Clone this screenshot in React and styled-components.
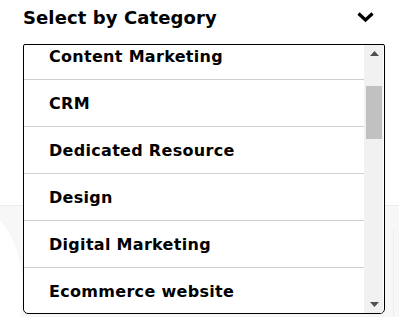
import React, { useLayoutEffect, useRef } from "react";
import styled, { createGlobalStyle } from "styled-components";

const categories = [
  "Content Marketing",
  "CRM",
  "Dedicated Resource",
  "Design",
  "Digital Marketing",
  "Ecommerce website",
];

export default function App() {
  const viewRef = useRef(null);

  useLayoutEffect(() => {
    if (viewRef.current) viewRef.current.scrollTop = 12;
  }, []);

  return (
    <>
      <GlobalStyle />
      <Page>
        <Header>
          <Title>Select by Category</Title>
          <svg width="19" height="12" viewBox="0 0 19 12">
            <path
              d="M2.5 2.5 L9.5 9 L16.5 2.5"
              fill="none"
              stroke="#000"
              strokeWidth="3.2"
            />
          </svg>
        </Header>
        <ListBox>
          <Viewport ref={viewRef}>
            {categories.map((c) => (
              <Option key={c}>{c}</Option>
            ))}
          </Viewport>
          <Scrollbar>
            <ArrowButton>
              <svg width="9" height="5" viewBox="0 0 9 5">
                <path d="M0 5 L4.5 0 L9 5 Z" fill="#505050" />
              </svg>
            </ArrowButton>
            <Track>
              <Thumb />
            </Track>
            <ArrowButton>
              <svg width="9" height="5" viewBox="0 0 9 5">
                <path d="M0 0 L4.5 5 L9 0 Z" fill="#505050" />
              </svg>
            </ArrowButton>
          </Scrollbar>
        </ListBox>
      </Page>
    </>
  );
}

const GlobalStyle = createGlobalStyle`
  html, body {
    margin: 0;
    padding: 0;
  }
  body {
    font-family: "DejaVu Sans", "Liberation Sans", sans-serif;
    color: #000;
    background:
      linear-gradient(#ececec, #ececec) 393px 230px / 1px 100% no-repeat,
      radial-gradient(ellipse 60px 110px at -20px 290px, #fff 70%, transparent 72%),
      linear-gradient(#fff 0 205px, #ececec 205px 206px, #f7f7f7 206px);
    min-height: 317px;
  }
`;

const Page = styled.div`
  width: 399px;
  height: 317px;
  box-sizing: border-box;
  padding: 0 14px 0 23px;
  display: flex;
  flex-direction: column;
`;

const Header = styled.div`
  height: 32px;
  display: flex;
  align-items: center;
  justify-content: space-between;
  padding-right: 10px;
  margin-top: 1px;
`;

const Title = styled.h2`
  margin: 0;
  font-size: 18px;
  font-weight: 700;
  letter-spacing: 0.1px;
`;

const ListBox = styled.div`
  margin-top: 11px;
  height: 270px;
  box-sizing: border-box;
  border: 1px solid #000;
  border-radius: 2px 2px 5px 5px;
  background: #fff;
  overflow: hidden;
  display: flex;
`;

const Viewport = styled.div`
  flex: 1;
  overflow: hidden;
`;

const Option = styled.div`
  height: 47px;
  box-sizing: border-box;
  border-bottom: 1px solid #cfcfcf;
  display: flex;
  align-items: center;
  padding-left: 25px;
  font-size: 16px;
  font-weight: 700;
  letter-spacing: 0.3px;
`;

const Scrollbar = styled.div`
  width: 19px;
  margin-right: 1px;
  background: #f1f1f1;
  display: flex;
  flex-direction: column;
`;

const ArrowButton = styled.div`
  height: 17px;
  display: flex;
  align-items: center;
  justify-content: center;
  padding-left: 1px;
`;

const Track = styled.div`
  flex: 1;
  padding: 24px 1px 0 2px;
`;

const Thumb = styled.div`
  height: 53px;
  background: #c1c1c1;
`;
